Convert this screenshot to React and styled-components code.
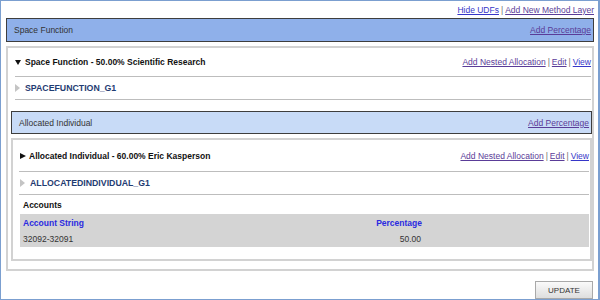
import React from 'react'
import styled, { createGlobalStyle } from 'styled-components'

const GlobalStyle = createGlobalStyle`
  html, body {
    margin: 0;
    padding: 0;
    background: #ffffff;
  }
  body {
    font-family: 'Liberation Sans', Arial, sans-serif;
    font-size: 8.5px;
    color: #333333;
  }
`

const accounts = [{ accountString: '32092-32091', percentage: '50.00' }]

export default function App() {
  return (
    <>
      <GlobalStyle />
      <Frame>
        <TopLinks>
          <Link $blue>Hide UDFs</Link>
          <Sep>|</Sep>
          <Link>Add New Method Layer</Link>
        </TopLinks>

        <LayerHeader $tone="dark">
          <span>Space Function</span>
          <Link>Add Percentage</Link>
        </LayerHeader>

        <Panel>
          <TitleRow $height={28}>
            <Title>
              <Toggle $open />
              Space Function - 50.00% Scientific Research
            </Title>
            <Actions />
          </TitleRow>
          <Divider $left={7} />
          <GroupRow>
            <GrayArrow />
            <GroupName>SPACEFUNCTION_G1</GroupName>
          </GroupRow>
          <Divider $left={7} />

          <Nested>
            <LayerHeader $tone="light">
              <span>Allocated Individual</span>
              <Link>Add Percentage</Link>
            </LayerHeader>

            <Panel $inner>
              <TitleRow $height={31}>
                <Title>
                  <Toggle />
                  Allocated Individual - 60.00% Eric Kasperson
                </Title>
                <Actions />
              </TitleRow>
              <Divider $left={6} />
              <GroupRow>
                <GrayArrow />
                <GroupName>ALLOCATEDINDIVIDUAL_G1</GroupName>
              </GroupRow>
              <Divider $left={6} />

              <SectionLabel>Accounts</SectionLabel>
              <Table>
                <HeadCell>Account String</HeadCell>
                <HeadCell $right>Percentage</HeadCell>
                <Cell />
                {accounts.map((a) => (
                  <React.Fragment key={a.accountString}>
                    <Cell>{a.accountString}</Cell>
                    <Cell $right>{a.percentage}</Cell>
                    <Cell />
                  </React.Fragment>
                ))}
              </Table>
            </Panel>
          </Nested>
        </Panel>

        <Footer>
          <UpdateButton>UPDATE</UpdateButton>
        </Footer>
      </Frame>
    </>
  )
}

function Actions() {
  return (
    <ActionLinks>
      <Link>Add Nested Allocation</Link>
      <Sep>|</Sep>
      <Link>Edit</Link>
      <Sep>|</Sep>
      <Link $blue>View</Link>
    </ActionLinks>
  )
}

// expand / collapse marker in front of a layer title
function Toggle({ $open }) {
  return $open ? (
    <ArrowIcon width="6" height="5" viewBox="0 0 6 5" $gap={4}>
      <path d="M0 0 L6 0 L3 5 Z" fill="#111" />
    </ArrowIcon>
  ) : (
    <ArrowIcon width="6" height="6" viewBox="0 0 6 6" $gap={3}>
      <path d="M0 0 L6 3 L0 6 Z" fill="#111" />
    </ArrowIcon>
  )
}

function GrayArrow() {
  return (
    <ArrowIcon width="5" height="8" viewBox="0 0 5 8" $gap={5}>
      <path d="M0 0 L5 4 L0 8 Z" fill="#c4c4c4" />
    </ArrowIcon>
  )
}

const Frame = styled.div`
  box-sizing: border-box;
  width: 600px;
  height: 300px;
  border: 1px solid #7b9fd0;
  border-right-width: 2px;
  padding: 0 4px 0 5px;
  display: flex;
  flex-direction: column;
`

const TopLinks = styled.div`
  height: 17px;
  display: flex;
  justify-content: flex-end;
  align-items: center;
`

const Link = styled.a`
  color: ${({ $blue }) => ($blue ? '#3636c8' : '#5a3c98')};
  text-decoration: underline;
  cursor: pointer;
  white-space: nowrap;
`

const Sep = styled.span`
  color: #707070;
  margin: 0 2px;
`

const LayerHeader = styled.div`
  box-sizing: border-box;
  height: ${({ $tone }) => ($tone === 'dark' ? '24px' : '23px')};
  border: 1px solid #3e3e3e;
  background: ${({ $tone }) => ($tone === 'dark' ? '#8fb0ea' : '#c8dbf7')};
  display: flex;
  align-items: center;
  justify-content: space-between;
  padding: 0 2px 0 7px;
  color: #333333;
`

const Panel = styled.div`
  box-sizing: border-box;
  margin-top: 4px;
  border: 2px solid #d2d2d2;
  padding-bottom: ${({ $inner }) => ($inner ? '12px' : '8px')};
  display: flex;
  flex-direction: column;
`

const TitleRow = styled.div`
  height: ${({ $height }) => $height}px;
  display: flex;
  align-items: center;
  justify-content: space-between;
  padding: 0 1px 0 7px;
`

const Title = styled.div`
  font-weight: bold;
  color: #111111;
  display: flex;
  align-items: center;
  white-space: nowrap;
`

const ActionLinks = styled.div`
  display: flex;
  align-items: center;
`

const Divider = styled.div`
  height: 1px;
  background: #bdbdbd;
  margin: 0 1px 0 ${({ $left }) => $left}px;
`

const GroupRow = styled.div`
  height: 22px;
  display: flex;
  align-items: center;
  padding-left: 7px;
`

const ArrowIcon = styled.svg`
  display: block;
  flex: none;
  margin-right: ${({ $gap }) => $gap}px;
`

const GroupName = styled.span`
  font-weight: bold;
  font-size: 8.75px;
  color: #1f3c72;
`

const Nested = styled.div`
  margin: 11px 0 0 3px;
  display: flex;
  flex-direction: column;
`

const SectionLabel = styled.div`
  height: 19px;
  display: flex;
  align-items: center;
  padding-left: 10px;
  font-weight: bold;
  color: #111111;
`

const Table = styled.div`
  margin: 0 1px 0 7px;
  background: #d4d4d4;
  display: grid;
  grid-template-columns: 300px 104px 1fr;
  grid-auto-rows: 16px;
  padding-top: 1px;
`

const HeadCell = styled.div`
  display: flex;
  align-items: center;
  justify-content: ${({ $right }) => ($right ? 'flex-end' : 'flex-start')};
  padding: 0 2px 0 3px;
  font-weight: bold;
  color: #2a2ae0;
`

const Cell = styled.div`
  display: flex;
  align-items: center;
  justify-content: ${({ $right }) => ($right ? 'flex-end' : 'flex-start')};
  padding: 0 3px;
  color: #333333;
`

const Footer = styled.div`
  display: flex;
  justify-content: flex-end;
  padding: 10px 1px 0 0;
`

const UpdateButton = styled.button`
  box-sizing: border-box;
  width: 58px;
  height: 18px;
  border: 1px solid #a9a9a9;
  background: linear-gradient(#fafafa, #dedede);
  font-family: 'Liberation Sans', Arial, sans-serif;
  font-size: 8px;
  color: #333333;
  padding: 0;
  cursor: pointer;
`
